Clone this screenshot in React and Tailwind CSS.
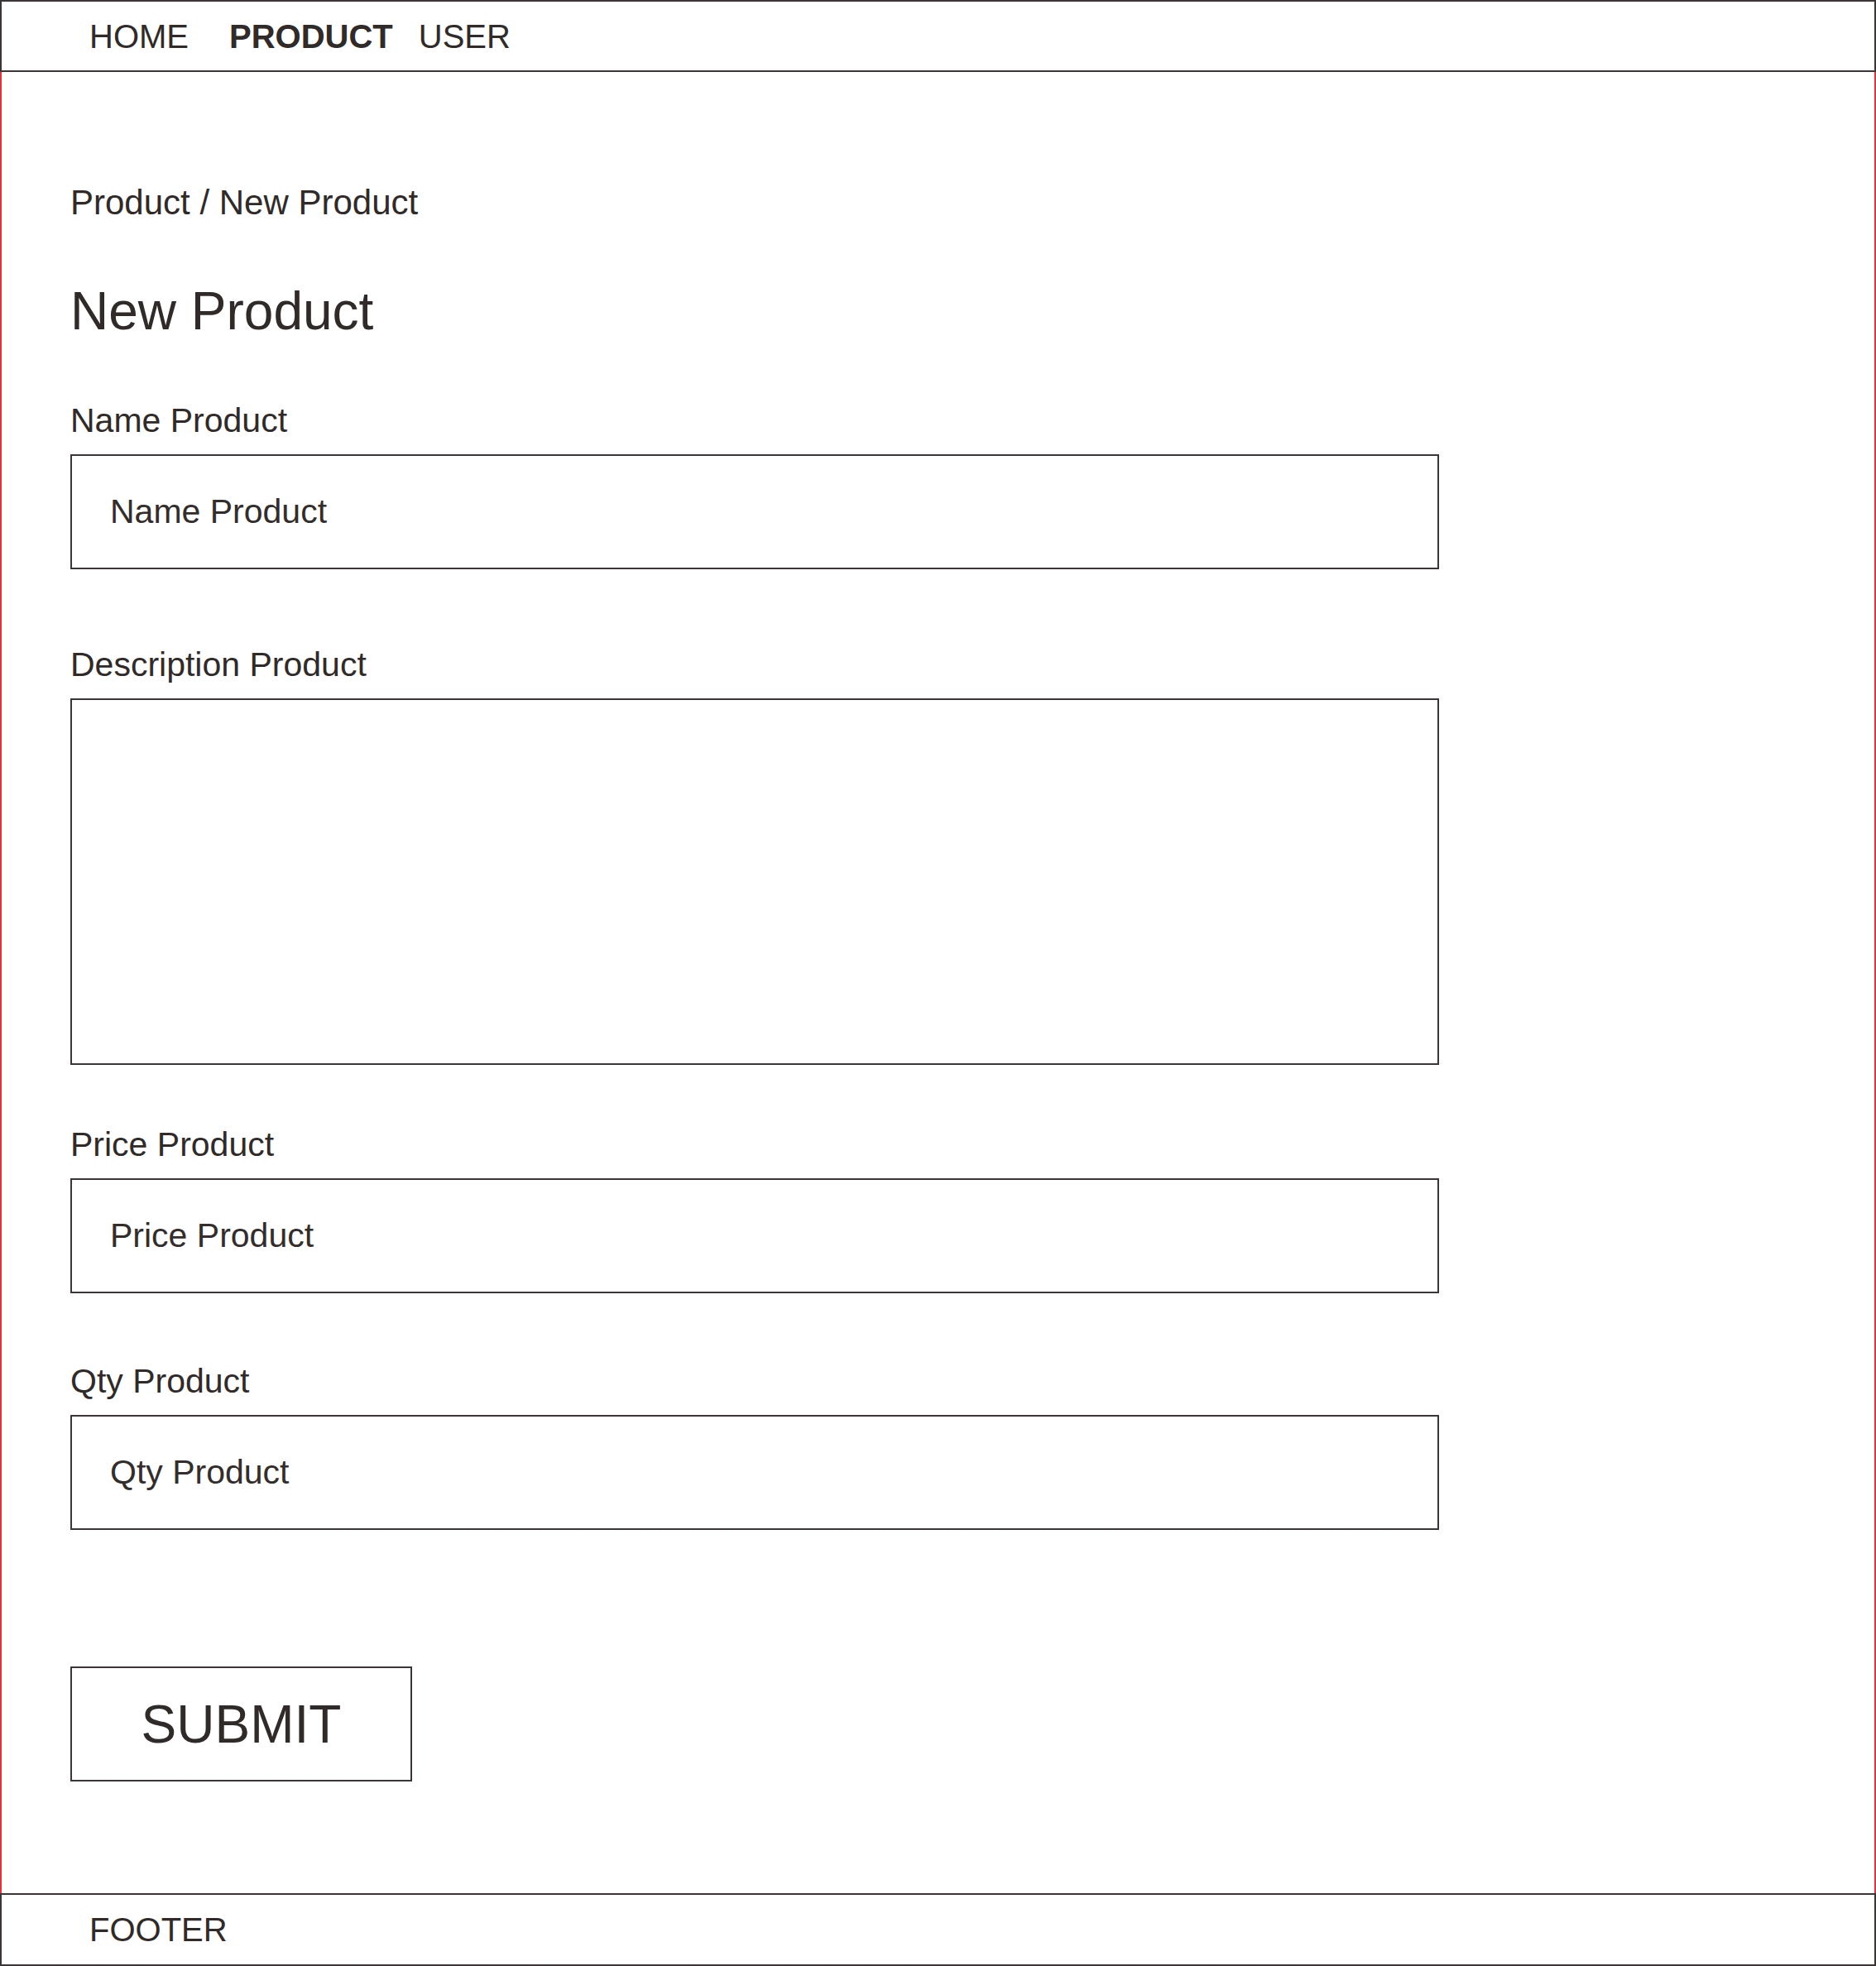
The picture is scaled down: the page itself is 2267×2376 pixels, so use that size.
import React from 'react'

const fields = [
  { label: 'Name Product', placeholder: 'Name Product', gap: 'mt-[80px]' },
  { label: 'Description Product', area: true, gap: 'mt-[95px]' },
  { label: 'Price Product', placeholder: 'Price Product', gap: 'mt-[76px]' },
  { label: 'Qty Product', placeholder: 'Qty Product', gap: 'mt-[86px]' },
]

function Field({ label, placeholder, area, gap }) {
  return (
    <div className={`flex flex-col ${gap}`}>
      <label className="text-[41px] leading-none">{label}</label>
      {area ? (
        <textarea
          readOnly
          className="mt-[20px] h-[443px] w-[1654px] resize-none border-2 border-[#3b3535] bg-white outline-none"
        />
      ) : (
        <input
          readOnly
          placeholder={placeholder}
          className="mt-[20px] h-[139px] w-[1654px] border-2 border-[#3b3535] bg-white pl-[46px] text-[41px] leading-none outline-none placeholder:text-[#332d2c]"
        />
      )}
    </div>
  )
}

export default function App() {
  return (
    <div className="flex h-[2376px] w-[2267px] flex-col bg-white font-['Liberation_Sans',Arial,sans-serif] text-[#302a29]">
      {/* Top nav */}
      <header className="flex h-[87px] shrink-0 items-center border-2 border-[#3b3535] pl-[106px] text-[40px] leading-none">
        <a>HOME</a>
        <a className="ml-[49px] font-bold">PRODUCT</a>
        <a className="ml-[31px]">USER</a>
      </header>

      <main className="flex flex-1 flex-col border-x-2 border-[#e5323a] pl-[83px] pt-[137px]">
        <div className="text-[42px] leading-none">Product / New Product</div>
        <h1 className="mt-[78px] text-[64px] leading-none">New Product</h1>

        {fields.map((f) => (
          <Field key={f.label} {...f} />
        ))}

        <button className="mt-[165px] h-[139px] w-[413px] border-2 border-[#3b3535] text-[64px] leading-none">
          SUBMIT
        </button>
      </main>

      <footer className="flex h-[88px] shrink-0 items-center border-2 border-[#3b3535] pl-[106px] text-[40px] leading-none">
        FOOTER
      </footer>
    </div>
  )
}
